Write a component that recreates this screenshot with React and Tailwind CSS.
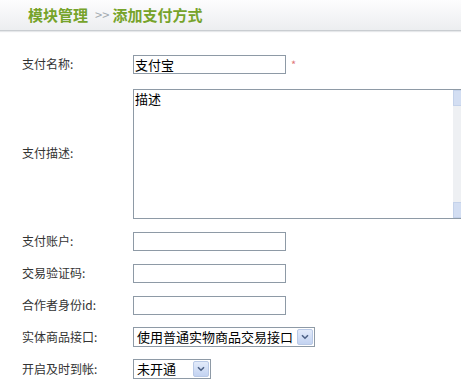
import React from 'react'

const font = { fontFamily: '"Noto Sans CJK SC", "Liberation Sans", sans-serif' }

function Arrow() {
  return (
    <div className="w-[16px] h-[16px] mr-[1px] flex items-center justify-center rounded-[2px] border border-[#b9c9e6] bg-gradient-to-b from-[#e3ebfa] to-[#c3d3f1]">
      <svg width="8" height="6" viewBox="0 0 8 6">
        <path d="M1 1.2L4 4.2L7 1.2" fill="none" stroke="#4d6185" strokeWidth="1.6" />
      </svg>
    </div>
  )
}

function Row({ label, children, className = 'h-[32px]' }) {
  return (
    <div className={`flex items-center ${className}`}>
      <div className="shrink-0 w-[133px] pl-[22px] text-[12px] text-[#333]">{label}</div>
      {children}
    </div>
  )
}

function Input({ value }) {
  return (
    <div className="shrink-0 w-[153px] h-[19px] border border-[#8e9aa6] bg-white px-[1px] text-[13px] leading-[17px] text-black">
      {value}
    </div>
  )
}

export default function App() {
  return (
    <div className="w-[461px] h-[384px] overflow-hidden bg-white" style={font}>
      {/* header */}
      <div className="h-[31px] flex items-center pl-[28px] border-b border-[#c9cdd1] bg-gradient-to-b from-[#fdfdfe] to-[#eceef0] shadow-[0_1px_1px_#e6e8ea]">
        <span className="text-[15px] font-bold text-[#76a32a]">模块管理</span>
        <span className="ml-[7px] mr-[3px] text-[13px] text-[#a3aab0]">&gt;&gt;</span>
        <span className="text-[15px] font-bold text-[#76a32a]">添加支付方式</span>
      </div>

      <div className="pt-[17px]">
        <Row label="支付名称:">
          <Input value="支付宝" />
          <span className="ml-[5px] text-[11px] text-[#e0767a]">*</span>
        </Row>

        <Row label="支付描述:" className="h-[145px]">
          <div className="shrink-0 w-[338px] h-[130px] mt-[2px] flex border border-[#8e9aa6] bg-white">
            <div className="flex-1 px-[1px] text-[13px] leading-[17px] text-black">描述</div>
            <div className="w-[17px] flex flex-col bg-[#eef0f3]">
              <div className="h-[16px] border border-[#c4d2ea] bg-[#d3def2]" />
              <div className="flex-1" />
              <div className="h-[16px] border border-[#c4d2ea] bg-[#d3def2]" />
            </div>
          </div>
        </Row>

        <Row label="支付账户:"><Input value="" /></Row>
        <Row label="交易验证码:"><Input value="" /></Row>
        <Row label="合作者身份id:"><Input value="" /></Row>

        <Row label="实体商品接口:">
          <div className="shrink-0 w-[182px] h-[20px] flex items-center border border-[#8e9aa6] bg-white">
            <span className="flex-1 pl-[3px] text-[13px] text-black">使用普通实物商品交易接口</span>
            <Arrow />
          </div>
        </Row>

        <Row label="开启及时到帐:">
          <div className="shrink-0 w-[78px] h-[20px] flex items-center border border-[#8e9aa6] bg-white">
            <span className="flex-1 pl-[3px] text-[13px] text-black">未开通</span>
            <Arrow />
          </div>
        </Row>
      </div>
    </div>
  )
}
